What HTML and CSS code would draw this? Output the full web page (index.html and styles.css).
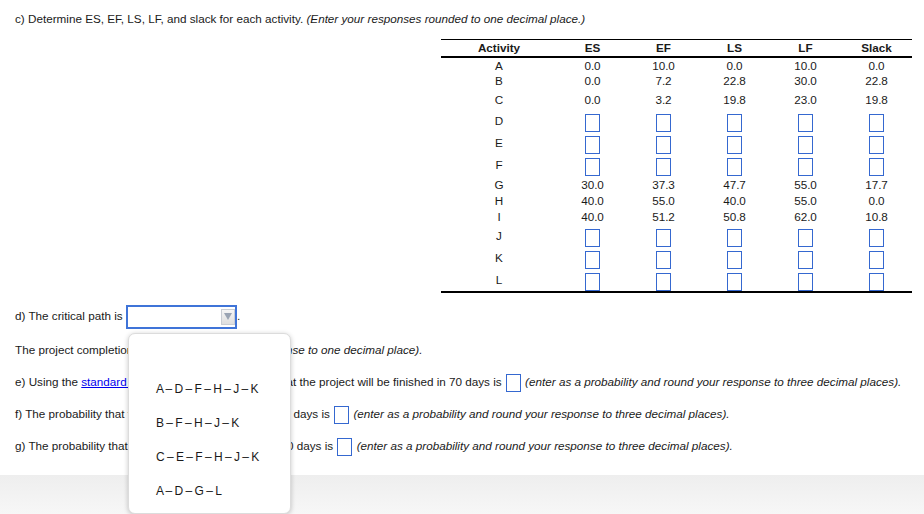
FILE: index.html
```html
<!DOCTYPE html>
<html>
<head>
<meta charset="utf-8">
<link rel="stylesheet" href="styles.css">
</head>
<body>
<div class="page">
  <p class="intro">c) Determine ES, EF, LS, LF, and slack for each activity. <i>(Enter your responses rounded to one decimal place.)</i></p>
  <div class="tblwrap">
    <div class="tbl">
      <div class="row head"><span>Activity</span><span>ES</span><span>EF</span><span>LS</span><span>LF</span><span>Slack</span></div>
      <div class="row h15"><span>A</span><span>0.0</span><span>10.0</span><span>0.0</span><span>10.0</span><span>0.0</span></div>
      <div class="row h16"><span>B</span><span>0.0</span><span>7.2</span><span>22.8</span><span>30.0</span><span>22.8</span></div>
      <div class="row h21"><span>C</span><span>0.0</span><span>3.2</span><span>19.8</span><span>23.0</span><span>19.8</span></div>
      <div class="row inp"><span>D</span><span class="bx"></span><span class="bx"></span><span class="bx"></span><span class="bx"></span><span class="bx"></span></div>
      <div class="row inp"><span>E</span><span class="bx"></span><span class="bx"></span><span class="bx"></span><span class="bx"></span><span class="bx"></span></div>
      <div class="row inp"><span>F</span><span class="bx"></span><span class="bx"></span><span class="bx"></span><span class="bx"></span><span class="bx"></span></div>
      <div class="row h17"><span>G</span><span>30.0</span><span>37.3</span><span>47.7</span><span>55.0</span><span>17.7</span></div>
      <div class="row h16"><span>H</span><span>40.0</span><span>55.0</span><span>40.0</span><span>55.0</span><span>0.0</span></div>
      <div class="row h16"><span>I</span><span>40.0</span><span>51.2</span><span>50.8</span><span>62.0</span><span>10.8</span></div>
      <div class="row inp"><span>J</span><span class="bx"></span><span class="bx"></span><span class="bx"></span><span class="bx"></span><span class="bx"></span></div>
      <div class="row inp"><span>K</span><span class="bx"></span><span class="bx"></span><span class="bx"></span><span class="bx"></span><span class="bx"></span></div>
      <div class="row inp"><span>L</span><span class="bx"></span><span class="bx"></span><span class="bx"></span><span class="bx"></span><span class="bx"></span></div>
    </div>
  </div>

  <div class="q qd">d) The critical path is <span class="selwrap"><span class="sel"><span class="arrow"><span class="tri"></span></span></span><span class="popup"><span class="opt"></span><span class="opt">A – D – F – H – J – K</span><span class="opt">B – F – H – J – K</span><span class="opt">C – E – F – H – J – K</span><span class="opt">A – D – G – L</span></span></span>.</div>
  <div class="q qp">The project completion time is <span class="bx"></span> <i>(round your response to one decimal place).</i></div>
  <div class="q">e) Using the <a class="lnk" href="#">standard normal table</a>, the probability that the project will be finished in 70 days is <span class="bx"></span> <i>(enter as a probability and round your response to three decimal places).</i></div>
  <div class="q">f) The probability that the project will be finished in 75 days is <span class="bx"></span> <i>(enter as a probability and round your response to three decimal places).</i></div>
  <div class="q">g) The probability that the project will be finished in 80 days is <span class="bx"></span> <i>(enter as a probability and round your response to three decimal places).</i></div>
  <div class="foot"></div>
</div>
</body>
</html>
```

FILE: styles.css
```css
html, body {
  margin: 0;
  padding: 0;
  background: #fff;
}
body {
  font-family: "Liberation Sans", Arial, sans-serif;
  font-size: 11.7px;
  color: #1a1a1a;
  overflow: hidden;
}
.intro {
  margin: 0;
  padding: 12px 0 0 15px;
  line-height: 14px;
  white-space: nowrap;
}
.tblwrap {
  margin-top: 13px;
  padding-left: 441px;
}
.tbl {
  width: 471px;
  border-top: 1px solid #000;
  border-bottom: 2px solid #000;
}
.row {
  display: grid;
  grid-template-columns: 116px repeat(5, 71px);
  align-items: center;
  justify-items: center;
  line-height: 14px;
}
.head {
  height: 16px;
  border-bottom: 2px solid #000;
  font-weight: bold;
}
.h15 { height: 15px; }
.h16 { height: 16px; }
.h17 { height: 17px; }
.h21 { height: 21px; }
.inp { height: 22px; }
.inp .bx { align-self: end; }
.bx {
  display: inline-block;
  width: 15px;
  height: 18px;
  box-sizing: border-box;
  border: 1px solid #3568d0;
  background: #fff;
  vertical-align: middle;
  margin: 0 1px;
}
.q {
  height: 32px;
  line-height: 32px;
  padding-left: 15px;
  white-space: nowrap;
}
.qd { margin-top: 7px; }
.qp { margin-top: 2px; }
.lnk {
  color: #0000ee;
  text-decoration: underline;
}
.selwrap {
  position: relative;
  display: inline-block;
  vertical-align: middle;
  width: 111px;
  height: 24px;
  line-height: 14px;
}
.sel {
  display: flex;
  justify-content: flex-end;
  align-items: center;
  width: 111px;
  height: 24px;
  box-sizing: border-box;
  border: 2px solid #3f74d8;
  background: #fff;
}
.arrow {
  display: flex;
  align-items: center;
  justify-content: center;
  width: 14px;
  height: 16px;
  box-sizing: border-box;
  border: 1px solid #c9cdd3;
  background: linear-gradient(#f6f6f6, #dedede);
}
.tri {
  width: 0;
  height: 0;
  border-left: 4px solid transparent;
  border-right: 4px solid transparent;
  border-top: 7px solid #9aa4b3;
}
.popup {
  position: absolute;
  z-index: 10;
  left: 2px;
  top: 28px;
  width: 163px;
  height: 181px;
  box-sizing: border-box;
  padding: 6px 0 5px;
  background: #fff;
  border: 1px solid #dcdcdc;
  border-radius: 7px;
  box-shadow: 0 1px 5px rgba(0, 0, 0, 0.22);
  display: flex;
  flex-direction: column;
}
.opt {
  display: block;
  height: 34px;
  line-height: 34px;
  padding-left: 27px;
  font-size: 12px;
  word-spacing: -1px;
  color: #1a1a1a;
}
.foot {
  margin-top: 13px;
  height: 39px;
  background: linear-gradient(#eeeeee, #f7f7f7);
}
```
